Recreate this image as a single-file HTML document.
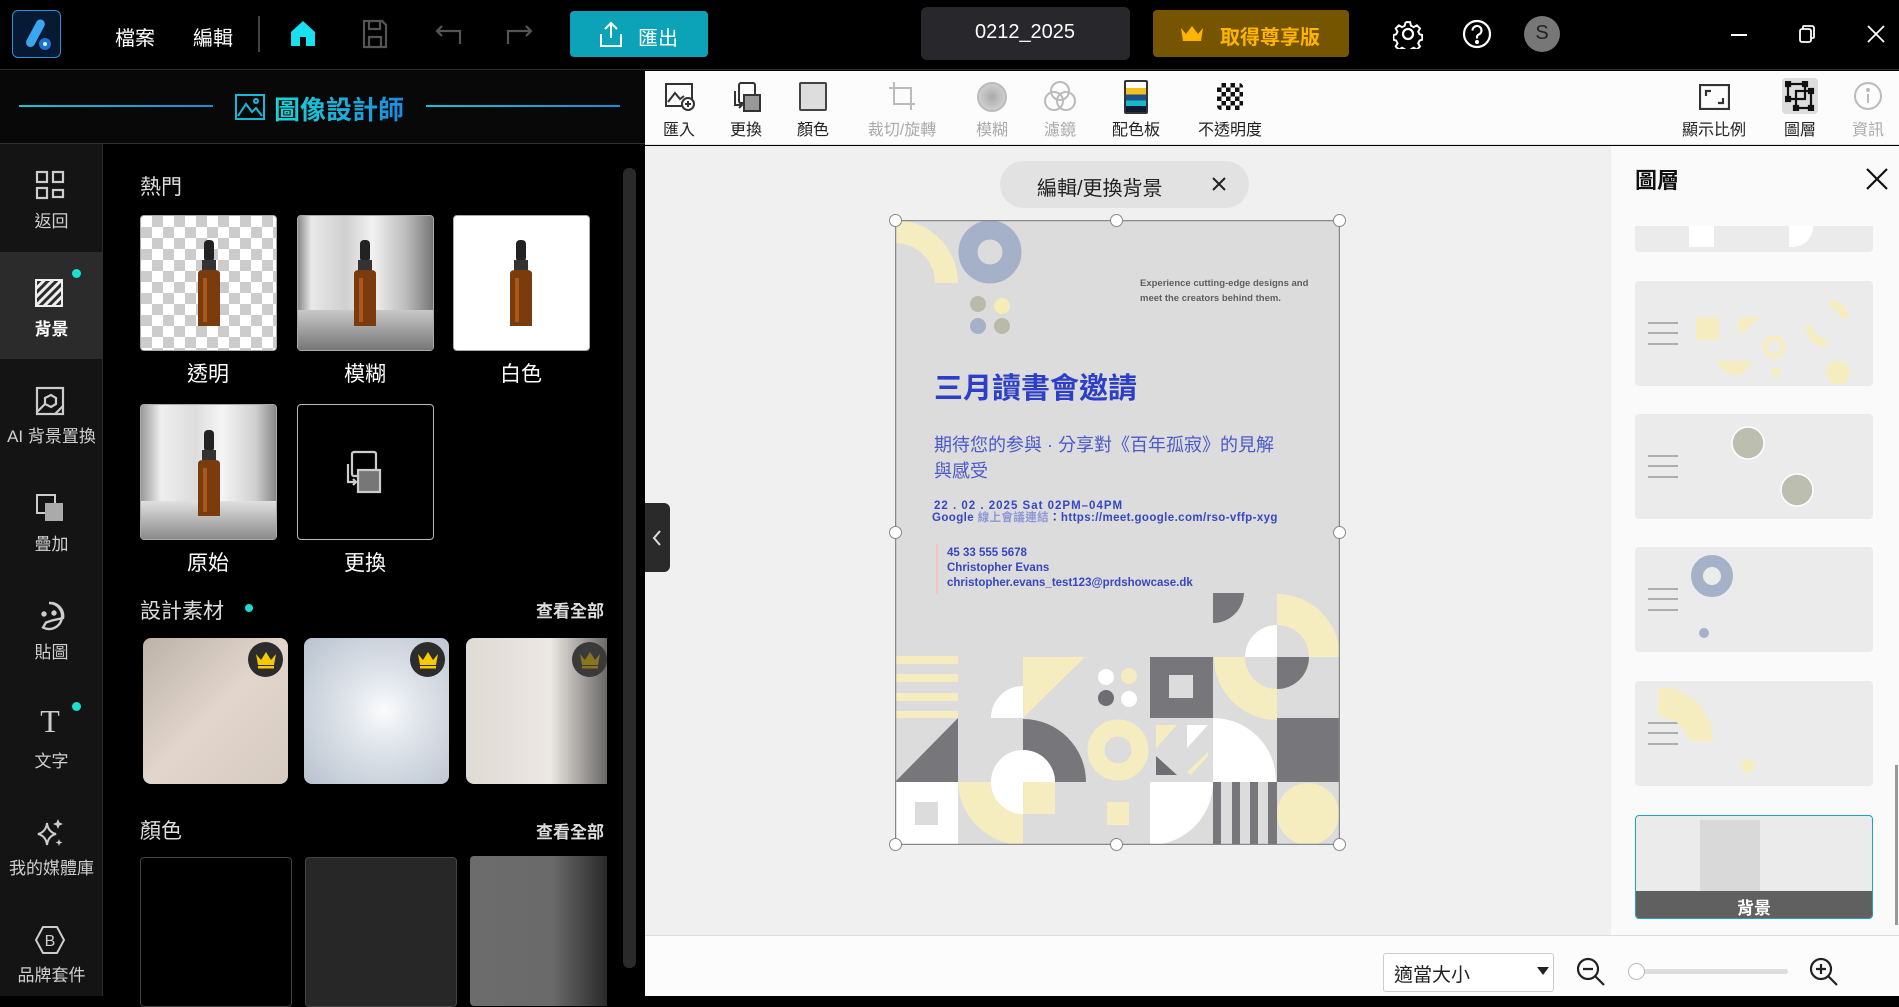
<!DOCTYPE html>
<html><head><meta charset="utf-8">
<style>
*{margin:0;padding:0;box-sizing:border-box}
body{width:1899px;height:996px;overflow:hidden;background:#000;font-family:"Liberation Sans","Noto Sans CJK TC",sans-serif;position:relative}
.a{position:absolute}
.t{position:absolute;white-space:nowrap}
.c{transform:translateX(-50%)}
.nav{color:#cfcfcf;font-size:17px;text-align:center;width:103px;left:0}
.tb{color:#222;font-size:16px}
.tbd{color:#aaa;font-size:16px}
</style></head><body>

<!-- TOP BAR -->
<div class="a" style="left:0;top:0;width:1899px;height:70px;background:#000;border-bottom:1px solid #2e2e2e"></div>
<div class="a" style="left:12px;top:10px;width:49px;height:48px;border:1.5px solid #2a8fd6;border-radius:6px;background:#071a33"></div>
<svg class="a" style="left:12px;top:10px" width="49" height="48"><rect x="19" y="8" width="9" height="30" rx="4.5" transform="rotate(28 23 23)" fill="#3aa6ee"/><circle cx="33" cy="34" r="6" fill="#1e6fd9"/><circle cx="33" cy="34" r="2" fill="#cfe"/></svg>
<div class="t" style="left:115px;top:22px;color:#fff;font-size:20px">檔案</div>
<div class="t" style="left:193px;top:22px;color:#fff;font-size:20px">編輯</div>
<div class="a" style="left:258px;top:16px;width:2px;height:36px;background:#444"></div>
<svg class="a" style="left:288px;top:18px" width="30" height="30"><path d="M3 14 L15 3 L27 14 V28 H3 Z" fill="#19e0f0"/><rect x="12" y="19" width="6" height="9" fill="#000"/></svg>
<svg class="a" style="left:362px;top:19px" width="26" height="30" fill="none" stroke="#555" stroke-width="2.2"><path d="M2 2H20L24 6V28H2Z"/><path d="M7 2V10H18V2M7 28V18H19V28"/></svg>
<svg class="a" style="left:434px;top:22px" width="30" height="24" fill="none" stroke="#555" stroke-width="2.2"><path d="M8 4L3 9L8 14M3 9H26V22"/></svg>
<svg class="a" style="left:504px;top:22px" width="30" height="24" fill="none" stroke="#555" stroke-width="2.2"><path d="M22 4L27 9L22 14M27 9H4V22"/></svg>
<div class="a" style="left:570px;top:11px;width:138px;height:46px;background:#0ca3b8;border-radius:4px"></div>
<svg class="a" style="left:598px;top:20px" width="26" height="28" fill="none" stroke="#fff" stroke-width="2"><path d="M13 18V3M7 9L13 3L19 9M3 14V26H23V14"/></svg>
<div class="t" style="left:638px;top:22px;color:#fff;font-size:20px">匯出</div>
<div class="a" style="left:921px;top:7px;width:209px;height:53px;background:#28282c;border-radius:6px"></div>
<div class="t c" style="left:1025px;top:21px;color:#fff;font-size:20px">0212_2025</div>
<div class="a" style="left:1153px;top:10px;width:196px;height:47px;background:#755500;border-radius:4px"></div>
<svg class="a" style="left:1180px;top:24px" width="24" height="20"><path d="M1 4L6 10L12 2L18 10L23 4L21 17H3Z" fill="#ffb400"/></svg>
<div class="t" style="left:1220px;top:21px;color:#ffb400;font-size:20px;font-weight:bold">取得尊享版</div>
<svg class="a" style="left:1393px;top:19px" width="30" height="30" fill="none" stroke="#fff" stroke-width="2.2"><circle cx="15" cy="15" r="5"/><path d="M12.5 2h5l1 4 3 1.5 3.5-2 3.5 3.5-2 3.5 1.5 3 4 1v0M12.5 2l-1 4-3 1.5-3.5-2-3.5 3.5 2 3.5-1.5 3-3 1v5l3 1 1.5 3-2 3.5 3.5 3.5 3.5-2 3 1.5 1 3h5l1-3 3-1.5 3.5 2 3.5-3.5-2-3.5 1.5-3 3-1v-5" transform="scale(.9) translate(1.5 1.5)"/></svg>
<svg class="a" style="left:1462px;top:19px" width="30" height="30" fill="none" stroke="#fff" stroke-width="2.2"><circle cx="15" cy="15" r="13"/><path d="M10.5 11.5a4.5 4.5 0 1 1 6 4.2c-1 .5-1.5 1.2-1.5 2.3v1.5"/><circle cx="15" cy="23" r="1" fill="#fff"/></svg>
<div class="a" style="left:1524px;top:16px;width:36px;height:36px;border-radius:50%;background:#777"></div>
<div class="t c" style="left:1542px;top:22px;color:#222;font-size:20px">S</div>
<div class="a" style="left:1731px;top:34px;width:16px;height:2px;background:#fff"></div>
<svg class="a" style="left:1798px;top:24px" width="18" height="20" fill="none" stroke="#fff" stroke-width="1.8"><rect x="2" y="5" width="11" height="13" rx="2"/><path d="M5 5V3a1 1 0 0 1 1-1h8a2 2 0 0 1 2 2v9a1 1 0 0 1-1 1h-2"/></svg>
<svg class="a" style="left:1867px;top:25px" width="18" height="18" stroke="#fff" stroke-width="1.8"><path d="M1 1L17 17M17 1L1 17"/></svg>

<!-- LEFT PANEL -->
<div class="a" style="left:0;top:71px;width:645px;height:73px;background:#080808;border-bottom:1px solid #333"></div>
<div class="a" style="left:19px;top:105px;width:194px;height:2px;background:linear-gradient(90deg,#18c4d2,#1a8ad8)"></div>
<div class="a" style="left:426px;top:105px;width:194px;height:2px;background:linear-gradient(90deg,#18c4d2,#1a8ad8)"></div>
<svg class="a" style="left:235px;top:94px" width="30" height="26" fill="none" stroke="#18b8d8" stroke-width="2"><rect x="1" y="1" width="28" height="24"/><path d="M3 22L11 10L17 18L21 14L27 22"/><circle cx="21" cy="7" r="2"/></svg>
<div class="t" style="left:274px;top:90px;font-size:26px;font-weight:bold;background:linear-gradient(90deg,#19d6d6,#1a8ce0);-webkit-background-clip:text;color:transparent">圖像設計師</div>

<div class="a" style="left:0;top:144px;width:103px;height:852px;background:#141414;border-right:1px solid #2a2a2a"></div>
<div class="a" style="left:0;top:252px;width:103px;height:107px;background:#2b2b2b"></div>
<div class="a" style="left:103px;top:144px;width:542px;height:852px;background:#000"></div>
<div class="a" style="left:623px;top:168px;width:13px;height:800px;background:#2a2a2a;border-radius:6px"></div>

<svg class="a" style="left:35px;top:170px" width="30" height="30" fill="none" stroke="#ccc" stroke-width="2.2"><rect x="2" y="2" width="10" height="10"/><rect x="18" y="2" width="10" height="10"/><rect x="2" y="18" width="10" height="10"/><rect x="18" y="20" width="10" height="7"/></svg>
<div class="t nav" style="top:207px">返回</div>
<svg class="a" style="left:35px;top:279px" width="28" height="28"><defs><pattern id="h" width="6" height="6" patternUnits="userSpaceOnUse" patternTransform="rotate(45)"><rect width="3" height="6" fill="#eee"/></pattern></defs><rect x="1" y="1" width="26" height="26" fill="url(#h)" stroke="#eee" stroke-width="2"/></svg>
<div class="a" style="left:72px;top:269px;width:9px;height:9px;border-radius:50%;background:#19e0d0"></div>
<div class="t nav" style="top:315px;color:#fff;font-weight:bold">背景</div>
<svg class="a" style="left:35px;top:386px" width="30" height="30" fill="none" stroke="#ccc" stroke-width="2.2"><rect x="2" y="2" width="26" height="26"/><path d="M10 12l6-3 5 3v6l-5 3-6-3z"/><path d="M2 26L10 18M20 28L28 20"/></svg>
<div class="t nav" style="top:422px">AI 背景置換</div>
<svg class="a" style="left:35px;top:493px" width="30" height="30"><rect x="2" y="2" width="18" height="18" fill="none" stroke="#ccc" stroke-width="2"/><rect x="10" y="10" width="18" height="18" fill="#aaa"/></svg>
<div class="t nav" style="top:530px">疊加</div>
<svg class="a" style="left:33px;top:600px" width="32" height="32" fill="none" stroke="#ccc" stroke-width="2.4"><path d="M16 3a13 13 0 1 1-6 24.5l3-5 6-2L30 18A13 13 0 0 0 16 3z"/><circle cx="11" cy="14" r="1.5" fill="#ccc"/><circle cx="21" cy="13" r="1.5" fill="#ccc"/></svg>
<div class="t nav" style="top:638px">貼圖</div>
<div class="t c" style="left:50px;top:703px;color:#ccc;font-size:32px;font-family:'Liberation Serif',serif">T</div>
<div class="a" style="left:72px;top:702px;width:9px;height:9px;border-radius:50%;background:#19e0d0"></div>
<div class="t nav" style="top:747px">文字</div>
<svg class="a" style="left:35px;top:818px" width="30" height="30" fill="#ccc"><path d="M12 5Q13 14 21 16Q13 18 12 27Q11 18 3 16Q11 14 12 5Z" fill="none" stroke="#ccc" stroke-width="2"/><path d="M23 1l1.5 3.5L28 6l-3.5 1.5L23 11l-1.5-3.5L18 6l3.5-1.5zM24 21l1 2.5 2.5 1-2.5 1-1 2.5-1-2.5-2.5-1 2.5-1z"/></svg>
<div class="t nav" style="top:854px">我的媒體庫</div>
<svg class="a" style="left:35px;top:925px" width="30" height="30" fill="none" stroke="#ccc" stroke-width="2"><path d="M8 2H22L29 15L22 28H8L1 15Z"/><text x="15" y="21" text-anchor="middle" font-size="16" fill="#ccc" stroke="none" font-family="Liberation Sans">B</text></svg>
<div class="t nav" style="top:961px">品牌套件</div>

<div class="t" style="left:140px;top:171px;color:#ddd;font-size:21px">熱門</div>
<div class="a" style="left:140px;top:215px;width:137px;height:136px;border-radius:4px;border:1px solid #aaa;background-color:#fff;background-image:linear-gradient(45deg,#ccc 25%,transparent 25%,transparent 75%,#ccc 75%),linear-gradient(45deg,#ccc 25%,transparent 25%,transparent 75%,#ccc 75%);background-size:22px 22px;background-position:0 0,11px 11px"></div>
<div class="a" style="left:297px;top:215px;width:137px;height:136px;border-radius:4px;border:1px solid #aaa;background:linear-gradient(90deg,#8a8a8a 0%,#e8e8e8 10%,#cfcfcf 35%,#f2f2f2 55%,#bcbcbc 80%,#777 100%)"><div class="a" style="left:0;bottom:0;width:100%;height:40px;background:linear-gradient(#c8c8c8,#777)"></div></div>
<div class="a" style="left:453px;top:215px;width:137px;height:136px;border-radius:4px;border:1px solid #aaa;background:#fff"></div>
<div class="a" style="left:140px;top:404px;width:137px;height:136px;border-radius:4px;border:1px solid #aaa;background:linear-gradient(90deg,#9a9a9a 0%,#efefef 15%,#dcdcdc 40%,#f5f5f5 60%,#cfcfcf 85%,#888 100%)"><div class="a" style="left:0;bottom:0;width:100%;height:38px;background:linear-gradient(#e0e0e0,#8a8a8a)"></div></div>
<div class="a" style="left:297px;top:404px;width:137px;height:136px;border-radius:4px;border:1.5px solid #bbb;background:#000"></div>
<svg class="a" style="left:341px;top:450px" width="46" height="46" fill="none" stroke="#ccc" stroke-width="2.2"><rect x="11" y="2" width="24" height="24" rx="2"/><rect x="17" y="20" width="22" height="22" fill="#777"/><path d="M7 14V32H15M12 29L15 32L12 35"/></svg>
<svg class="a" style="left:191px;top:240px" width="36" height="90"><rect x="13" y="0" width="10" height="22" rx="4" fill="#222"/><rect x="11" y="20" width="14" height="10" fill="#333"/><path d="M7 34Q7 30 12 30H24Q29 30 29 34V86H7Z" fill="#7a3c0c"/><rect x="12" y="38" width="4" height="44" fill="#a85a1c"/></svg>
<svg class="a" style="left:347px;top:240px" width="36" height="90"><rect x="13" y="0" width="10" height="22" rx="4" fill="#222"/><rect x="11" y="20" width="14" height="10" fill="#333"/><path d="M7 34Q7 30 12 30H24Q29 30 29 34V86H7Z" fill="#7a3c0c"/><rect x="12" y="38" width="4" height="44" fill="#a85a1c"/></svg>
<svg class="a" style="left:503px;top:240px" width="36" height="90"><rect x="13" y="0" width="10" height="22" rx="4" fill="#222"/><rect x="11" y="20" width="14" height="10" fill="#333"/><path d="M7 34Q7 30 12 30H24Q29 30 29 34V86H7Z" fill="#7a3c0c"/><rect x="12" y="38" width="4" height="44" fill="#a85a1c"/></svg>
<svg class="a" style="left:191px;top:430px" width="36" height="90"><rect x="13" y="0" width="10" height="22" rx="4" fill="#222"/><rect x="11" y="20" width="14" height="10" fill="#333"/><path d="M7 34Q7 30 12 30H24Q29 30 29 34V86H7Z" fill="#7a3c0c"/><rect x="12" y="38" width="4" height="44" fill="#a85a1c"/></svg>
<div class="t c" style="left:208px;top:358px;color:#fff;font-size:21px">透明</div>
<div class="t c" style="left:365px;top:358px;color:#fff;font-size:21px">模糊</div>
<div class="t c" style="left:521px;top:358px;color:#fff;font-size:21px">白色</div>
<div class="t c" style="left:208px;top:547px;color:#fff;font-size:21px">原始</div>
<div class="t c" style="left:365px;top:547px;color:#fff;font-size:21px">更換</div>

<div class="t" style="left:140px;top:595px;color:#ddd;font-size:21px">設計素材</div>
<div class="a" style="left:245px;top:604px;width:8px;height:8px;border-radius:50%;background:#19e0d0"></div>
<div class="t" style="left:536px;top:597px;color:#ddd;font-size:17px;font-weight:bold">查看全部</div>
<div class="a" style="left:143px;top:638px;width:145px;height:146px;border-radius:8px;background:linear-gradient(135deg,#bdb2a8,#e2d6cc 50%,#d6cbc0)"></div>
<div class="a" style="left:304px;top:638px;width:145px;height:146px;border-radius:8px;background:radial-gradient(circle at 55% 50%,#fbfbfb 0,#dfe4ea 35%,#b8c2ce 100%)"></div>
<div class="a" style="left:466px;top:638px;width:141px;height:146px;border-radius:8px 0 0 8px;background:linear-gradient(90deg,#e0dad4,#ebe7e2 60%,#6a6868 100%)"></div>
<div class="a" style="left:248px;top:642px;width:35px;height:35px;border-radius:50%;background:#2c2c2c"></div>
<div class="a" style="left:410px;top:642px;width:35px;height:35px;border-radius:50%;background:#2c2c2c"></div>
<div class="a" style="left:572px;top:642px;width:35px;height:35px;border-radius:50%;background:#3a3a3a"></div>
<svg class="a" style="left:254px;top:650px" width="24" height="20"><path d="M2 4L7 10L12 2L17 10L22 4L20 15H4Z" fill="#f5c800"/><rect x="4" y="16" width="16" height="2.5" fill="#f5c800"/></svg>
<svg class="a" style="left:416px;top:650px" width="24" height="20"><path d="M2 4L7 10L12 2L17 10L22 4L20 15H4Z" fill="#f5c800"/><rect x="4" y="16" width="16" height="2.5" fill="#f5c800"/></svg>
<svg class="a" style="left:578px;top:650px" width="24" height="20"><path d="M2 4L7 10L12 2L17 10L22 4L20 15H4Z" fill="#8a7420"/><rect x="4" y="16" width="16" height="2.5" fill="#8a7420"/></svg>

<div class="t" style="left:140px;top:815px;color:#ddd;font-size:21px">顏色</div>
<div class="t" style="left:536px;top:818px;color:#ddd;font-size:17px;font-weight:bold">查看全部</div>
<div class="a" style="left:140px;top:857px;width:152px;height:150px;border-radius:4px;border:1px solid #444;background:#000"></div>
<div class="a" style="left:305px;top:857px;width:152px;height:150px;border-radius:4px;border:1px solid #444;background:#272727"></div>
<div class="a" style="left:470px;top:856px;width:137px;height:150px;border-radius:4px 0 0 4px;background:linear-gradient(90deg,#6c6c6c,#6a6a6a 60%,#2a2a2a)"></div>

<!-- TOOLBAR -->
<div class="a" style="left:645px;top:71px;width:1254px;height:74px;background:#fcfcfc;border-bottom:1px solid #e4e4e4"></div>
<svg class="a" style="left:664px;top:82px" width="32" height="30" fill="none" stroke="#333" stroke-width="2"><rect x="2" y="2" width="26" height="22"/><path d="M4 20L11 11L16 17L20 14"/><circle cx="24" cy="22" r="6" fill="#fff"/><path d="M24 19V25M21 22H27"/></svg>
<div class="t c tb" style="left:679px;top:116px">匯入</div>
<svg class="a" style="left:731px;top:81px" width="32" height="32" fill="none" stroke="#333" stroke-width="2"><rect x="8" y="2" width="16" height="20" rx="2"/><rect x="13" y="14" width="16" height="16" fill="#999"/><path d="M4 10V24H10M8 21l3 3-3 3"/></svg>
<div class="t c tb" style="left:746px;top:116px">更換</div>
<div class="a" style="left:799px;top:82px;width:28px;height:29px;border:2px solid #444;background:#ddd;border-radius:2px"></div>
<div class="t c tb" style="left:813px;top:116px">顏色</div>
<svg class="a" style="left:887px;top:80px" width="30" height="32" fill="none" stroke="#bbb" stroke-width="2"><path d="M7 2V24H28M2 8H24V30"/></svg>
<div class="t c tbd" style="left:902px;top:116px">裁切/旋轉</div>
<div class="a" style="left:977px;top:82px;width:30px;height:30px;border-radius:50%;border:2px solid #bbb;background:radial-gradient(#aaa,#ddd)"></div>
<div class="t c tbd" style="left:992px;top:116px">模糊</div>
<svg class="a" style="left:1043px;top:80px" width="34" height="34" fill="none" stroke="#bbb" stroke-width="2"><circle cx="17" cy="11" r="9"/><circle cx="11" cy="21" r="9"/><circle cx="23" cy="21" r="9"/></svg>
<div class="t c tbd" style="left:1060px;top:116px">濾鏡</div>
<div class="a" style="left:1124px;top:80px;width:24px;height:34px;border:2px solid #333;border-radius:2px;background:linear-gradient(#fff 0 20%,#f4c020 20% 42%,#1c4f8a 42% 62%,#17b8c8 62% 80%,#0b1a30 80%)"></div>
<div class="t c tb" style="left:1136px;top:116px">配色板</div>
<div class="a" style="left:1217px;top:83px;width:26px;height:27px;background-color:#fff;background-image:linear-gradient(45deg,#111 25%,transparent 25%,transparent 75%,#111 75%),linear-gradient(45deg,#111 25%,transparent 25%,transparent 75%,#111 75%);background-size:9px 9px;background-position:0 0,4.5px 4.5px;border-radius:4px"></div>
<div class="t c tb" style="left:1230px;top:116px">不透明度</div>
<svg class="a" style="left:1699px;top:84px" width="31" height="26" fill="none" stroke="#333" stroke-width="2.2"><rect x="1" y="1" width="29" height="24"/><path d="M7 12V7H12M24 14V19H19"/></svg>
<div class="t c tb" style="left:1714px;top:116px">顯示比例</div>
<div class="a" style="left:1782px;top:78px;width:36px;height:36px;background:#ddd;border-radius:4px"></div>
<svg class="a" style="left:1785px;top:81px" width="30" height="30" fill="none" stroke="#111" stroke-width="2.2"><rect x="3" y="3" width="17" height="15"/><rect x="11" y="10" width="15" height="17"/><g fill="#111"><rect x="1" y="1" width="4" height="4"/><rect x="18" y="1" width="4" height="4"/><rect x="1" y="16" width="4" height="4"/><rect x="24" y="8" width="4" height="4"/><rect x="9" y="25" width="4" height="4"/><rect x="24" y="25" width="4" height="4"/></g></svg>
<div class="t c tb" style="left:1800px;top:116px">圖層</div>
<svg class="a" style="left:1853px;top:81px" width="30" height="30" fill="none" stroke="#bbb" stroke-width="2"><circle cx="15" cy="15" r="13"/><path d="M15 13V22"/><circle cx="15" cy="9" r="1" fill="#bbb"/></svg>
<div class="t c tbd" style="left:1868px;top:116px">資訊</div>

<!-- CANVAS AREA -->
<div class="a" style="left:645px;top:146px;width:966px;height:789px;background:#f0f0f0"></div>
<div class="a" style="left:645px;top:503px;width:25px;height:69px;background:#2a2a2a;border-radius:0 6px 6px 0"></div>
<svg class="a" style="left:650px;top:528px" width="14" height="20" fill="none" stroke="#ddd" stroke-width="2"><path d="M10 3L4 10L10 17"/></svg>
<div class="a" style="left:1000px;top:161px;width:249px;height:47px;background:#e2e2e2;border-radius:24px"></div>
<div class="t" style="left:1037px;top:172px;color:#222;font-size:20px">編輯/更換背景</div>
<svg class="a" style="left:1211px;top:176px" width="16" height="16" stroke="#222" stroke-width="2"><path d="M2 2L14 14M14 2L2 14"/></svg>

<!-- POSTER -->
<svg class="a" style="left:895px;top:220px" width="445" height="625" viewBox="0 0 445 625">
<rect width="445" height="625" fill="#dcdcdc"/>
<path d="M0 0A63 63 0 0 1 63 63H40A40 40 0 0 0 0 23Z" fill="#f5ecc0"/>
<circle cx="95" cy="32" r="22" fill="none" stroke="#a5b1c9" stroke-width="19"/>
<circle cx="83" cy="84" r="8" fill="#b9bba8"/><circle cx="107" cy="86" r="8" fill="#f5ecb8"/>
<circle cx="83" cy="106" r="8" fill="#a5b1c8"/><circle cx="107" cy="106" r="8" fill="#b9bba8"/>
<g fill="#5e5e5e" font-size="9.5" font-weight="bold" font-family="Liberation Sans"><text x="245" y="66">Experience cutting-edge designs and</text><text x="245" y="81">meet the creators behind them.</text></g>
<text x="39" y="178" fill="#2d3fc6" font-size="29" font-weight="bold" font-family="Liberation Sans,Noto Sans CJK TC,sans-serif">三月讀書會邀請</text>
<g fill="#4a5ac8" font-size="18" font-family="Liberation Sans,Noto Sans CJK TC,sans-serif"><text x="39" y="231">期待您的参與 · 分享對《百年孤寂》的見解</text><text x="39" y="257">與感受</text></g>
<g fill="#3747c2" font-size="11.5" font-weight="bold" font-family="Liberation Sans,Noto Sans CJK TC,sans-serif"><text x="39" y="289" letter-spacing="1">22 . 02 . 2025  Sat    02PM–04PM</text><text x="37" y="301" letter-spacing="0.4">Google <tspan fill="#8d97d8">線上會議連結</tspan>：https://meet.google.com/rso-vffp-xyg</text>
<text x="52" y="336">45 33 555 5678</text><text x="52" y="351">Christopher Evans</text><text x="52" y="366">christopher.evans_test123@prdshowcase.dk</text></g>
<rect x="41" y="324" width="2" height="50" fill="#f2c4c8"/>
<g fill="#f5ecc0"><rect x="0" y="436" width="63" height="8"/><rect x="0" y="454" width="63" height="8"/><rect x="0" y="473" width="63" height="8"/><rect x="0" y="491" width="63" height="7"/></g>
<path d="M0 562L63 498V562Z" fill="#77777b"/>
<rect x="0" y="562" width="63" height="63" fill="#fff"/><rect x="20" y="582" width="23" height="23" fill="#dcdcdc"/>
<path d="M128 437H190L128 498Z" fill="#f5ecc0"/>
<path d="M128 498V466A32 32 0 0 0 96 498Z" fill="#fff"/>
<path d="M63 562A65 65 0 0 0 128 625V562Z" fill="#f5ecc0"/>
<rect x="128" y="562" width="32" height="32" fill="#f5ecc0"/>
<path d="M128 499A63 63 0 0 1 191 562H160A32 32 0 0 0 128 530Z" fill="#77777b"/>
<circle cx="128" cy="562" r="32" fill="#fff"/>
<path d="M128 562H160A32 32 0 0 1 128 594Z" fill="#f5ecc0"/>
<circle cx="211" cy="457" r="8" fill="#fff"/><circle cx="234" cy="456" r="8" fill="#f5ecc0"/>
<circle cx="211" cy="478" r="8" fill="#6f6f73"/><circle cx="234" cy="479" r="8" fill="#fff"/>
<circle cx="223" cy="530" r="22" fill="none" stroke="#f5ecc0" stroke-width="17"/>
<rect x="212" y="582" width="22" height="23" fill="#f5ecc0"/>
<rect x="255" y="437" width="63" height="61" fill="#77777b"/><rect x="274" y="455" width="24" height="23" fill="#dcdcdc"/>
<path d="M261 505H282L261 528Z" fill="#f5ecc0"/><path d="M292 505H313L292 528Z" fill="#fff"/>
<path d="M261 555H282L261 536Z" fill="#6f6f73"/><path d="M292 552L313 532V536L296 555Z" fill="#f5ecc0"/>
<path d="M255 562H318A63 63 0 0 1 255 625Z" fill="#fff"/>
<path d="M318 373H349A31 31 0 0 1 318 403Z" fill="#77777b"/>
<circle cx="382" cy="437" r="32" fill="#dcdcdc"/>
<path d="M382 437V405A32 32 0 0 0 350 437Z" fill="#fff"/>
<path d="M382 437H414A32 32 0 0 1 382 469Z" fill="#77777b"/>
<path d="M382 374A63 63 0 0 1 445 437H414A32 32 0 0 0 382 405Z" fill="#f5ecc0"/>
<path d="M319 437H350A32 32 0 0 0 382 469V500A63 63 0 0 1 319 437Z" fill="#f5ecc0"/>
<path d="M318 498A63 63 0 0 1 381 562H318Z" fill="#fff"/>
<rect x="382" y="498" width="63" height="64" fill="#77777b"/>
<g fill="#77777b"><rect x="318" y="562" width="8" height="63"/><rect x="337" y="562" width="8" height="63"/><rect x="355" y="562" width="8" height="63"/><rect x="373" y="562" width="9" height="63"/></g>
<circle cx="413" cy="594" r="31" fill="#f5ecc0"/>
<rect x="0.5" y="0.5" width="444" height="624" fill="none" stroke="#888" stroke-width="1.5"/>
</svg>
<div class="a" style="left:889px;top:214px;width:13px;height:13px;border-radius:50%;background:#fff;border:1px solid #888"></div>
<div class="a" style="left:1110px;top:214px;width:13px;height:13px;border-radius:50%;background:#fff;border:1px solid #888"></div>
<div class="a" style="left:1333px;top:214px;width:13px;height:13px;border-radius:50%;background:#fff;border:1px solid #888"></div>
<div class="a" style="left:889px;top:526px;width:13px;height:13px;border-radius:50%;background:#fff;border:1px solid #888"></div>
<div class="a" style="left:1333px;top:526px;width:13px;height:13px;border-radius:50%;background:#fff;border:1px solid #888"></div>
<div class="a" style="left:889px;top:838px;width:13px;height:13px;border-radius:50%;background:#fff;border:1px solid #888"></div>
<div class="a" style="left:1110px;top:838px;width:13px;height:13px;border-radius:50%;background:#fff;border:1px solid #888"></div>
<div class="a" style="left:1333px;top:838px;width:13px;height:13px;border-radius:50%;background:#fff;border:1px solid #888"></div>

<!-- RIGHT PANEL -->
<div class="a" style="left:1611px;top:146px;width:288px;height:789px;background:#fafafa"></div>
<div class="a" style="left:1895px;top:765px;width:3px;height:160px;background:#999"></div>
<div class="t" style="left:1635px;top:163px;color:#111;font-size:22px;font-weight:bold">圖層</div>
<svg class="a" style="left:1866px;top:168px" width="22" height="22" stroke="#111" stroke-width="2.2"><path d="M1 1L21 21M21 1L1 21"/></svg>
<div class="a" style="left:1635px;top:226px;width:238px;height:26px;background:#ebebeb;border-radius:0 0 4px 4px"></div>
<div class="a" style="left:1689px;top:226px;width:25px;height:21px;background:#fff"></div><div class="a" style="left:1789px;top:226px;width:24px;height:21px;background:#fff;border-radius:0 0 20px 0"></div>
<div class="a" style="left:1635px;top:281px;width:238px;height:105px;background:#ebebeb;border-radius:4px"></div>
<svg class="a" style="left:1635px;top:281px" width="238" height="105"><g stroke="#999" stroke-width="1.5"><path d="M13 42H43M13 52H43M13 63H43"/></g><g fill="#f5ecc0"><rect x="61" y="36" width="23" height="23"/><path d="M104 36H125L104 55Z"/><path d="M82 80H117A18 18 0 0 1 82 80Z"/><circle cx="203" cy="92" r="12"/><path d="M195 18A22 22 0 0 1 214 37H206A14 14 0 0 0 195 26Z"/><path d="M170 44H178A14 14 0 0 0 192 58V66A22 22 0 0 1 170 44Z"/><circle cx="139" cy="66" r="9" fill="none" stroke="#f5ecc0" stroke-width="5"/><rect x="137" y="87" width="8" height="8"/></g></svg>
<div class="a" style="left:1635px;top:414px;width:238px;height:105px;background:#ebebeb;border-radius:4px"></div>
<svg class="a" style="left:1635px;top:414px" width="238" height="105"><g stroke="#999" stroke-width="1.5"><path d="M13 42H43M13 52H43M13 63H43"/></g><circle cx="113" cy="29" r="16" fill="#bcbfb0" stroke="#fff" stroke-width="1.5"/><circle cx="162" cy="76" r="16" fill="#bcbfb0" stroke="#fff" stroke-width="1.5"/></svg>
<div class="a" style="left:1635px;top:547px;width:238px;height:105px;background:#ebebeb;border-radius:4px"></div>
<svg class="a" style="left:1635px;top:547px" width="238" height="105"><g stroke="#999" stroke-width="1.5"><path d="M13 42H43M13 52H43M13 63H43"/></g><circle cx="77" cy="29" r="15" fill="none" stroke="#a5b1c9" stroke-width="12"/><circle cx="69" cy="86" r="5" fill="#a5b1c9"/></svg>
<div class="a" style="left:1635px;top:681px;width:238px;height:105px;background:#ebebeb;border-radius:4px"></div>
<svg class="a" style="left:1635px;top:681px" width="238" height="105"><g stroke="#999" stroke-width="1.5"><path d="M13 42H43M13 52H43M13 63H43"/></g><path d="M24 6A54 54 0 0 1 78 60H54A30 30 0 0 0 24 36Z" fill="#f5ecc0"/><circle cx="113" cy="85" r="7" fill="#f5ecc0"/></svg>
<div class="a" style="left:1635px;top:815px;width:238px;height:104px;background:#ebebeb;border:1.5px solid #1aa6b8;border-radius:4px;overflow:hidden"><div class="a" style="left:64px;top:4px;width:60px;height:96px;background:#d9d9d9"></div><div class="a" style="left:0;top:75px;width:100%;height:30px;background:#606060"></div></div>
<div class="t c" style="left:1754px;top:894px;color:#fff;font-size:17px;font-weight:bold">背景</div>

<!-- BOTTOM BAR -->
<div class="a" style="left:645px;top:935px;width:1254px;height:61px;background:#fcfcfc;border-top:1px solid #ddd"></div>
<div class="a" style="left:1383px;top:953px;width:171px;height:39px;border:1px solid #ccc;border-radius:3px;background:#fff"></div>
<div class="t" style="left:1394px;top:960px;color:#222;font-size:19px">適當大小</div>
<svg class="a" style="left:1537px;top:967px" width="12" height="8"><path d="M0 0H12L6 8Z" fill="#222"/></svg>
<svg class="a" style="left:1575px;top:956px" width="32" height="32" fill="none" stroke="#222" stroke-width="2.2"><circle cx="13" cy="13" r="10"/><path d="M20 20L29 29M8 13H18"/></svg>
<div class="a" style="left:1635px;top:969px;width:153px;height:5px;background:#ddd;border-radius:3px"></div>
<div class="a" style="left:1628px;top:963px;width:17px;height:17px;border-radius:50%;background:#fff;border:1.5px solid #bbb"></div>
<svg class="a" style="left:1808px;top:956px" width="32" height="32" fill="none" stroke="#222" stroke-width="2.2"><circle cx="13" cy="13" r="10"/><path d="M20 20L29 29M8 13H18M13 8V18"/></svg>
</body></html>
